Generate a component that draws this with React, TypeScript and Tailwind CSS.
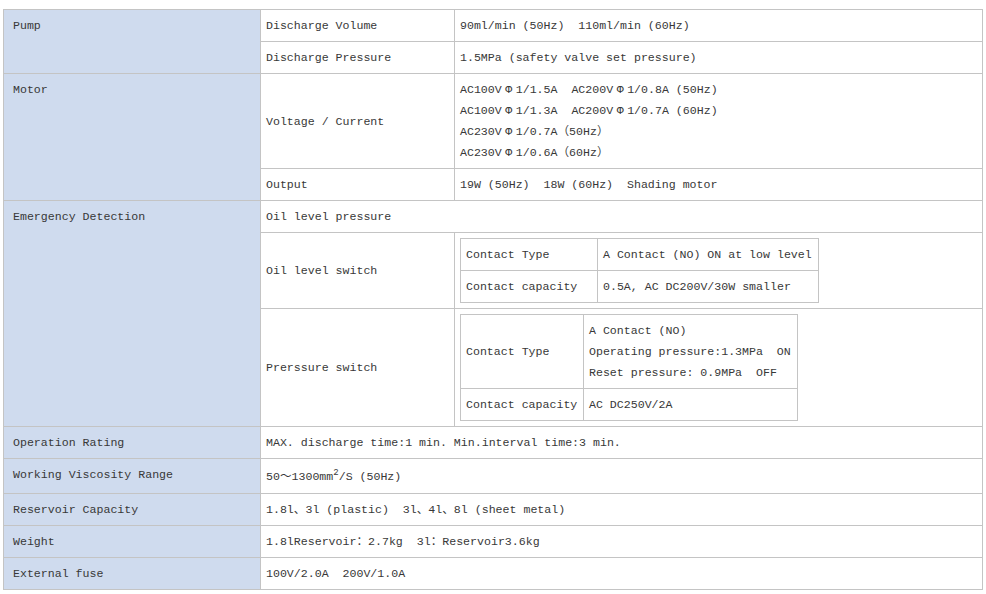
import { FC, ReactNode } from "react";

const font = "[font-family:'Liberation_Mono','Noto_Sans_CJK_SC',monospace]";

const Head: FC<{ children: ReactNode; rows?: number }> = ({ children, rows }) => (
  <td
    rowSpan={rows}
    className="border border-[#c4c4c4] bg-[#cfdbee] align-top pl-[9px] pr-2 pt-[8px] leading-[16px]"
  >
    {children}
  </td>
);

const Cell: FC<{ children: ReactNode; cols?: number; className?: string }> = ({
  children,
  cols,
  className,
}) => (
  <td
    colSpan={cols}
    className={`border border-[#c4c4c4] align-middle px-[5px] leading-[21px] ${className ?? ""}`}
  >
    {children}
  </td>
);

const Inner: FC<{ children: ReactNode; className?: string }> = ({ children, className }) => (
  <td className={`border border-[#c4c4c4] align-middle px-[5px] leading-[21px] ${className ?? ""}`}>
    {children}
  </td>
);

// full-width phi, as the source font draws it
const Phi = () => <span className="inline-block w-[14px] text-center">Φ</span>;

export default function App() {
  return (
    <div className={`w-[986px] h-[594px] bg-white pt-[9px] pl-[3px] text-[11.6px] text-[#383838] ${font}`}>
      <table className="border-collapse w-[979px] table-fixed">
        <colgroup>
          <col className="w-[257px]" />
          <col className="w-[194px]" />
          <col className="w-[528px]" />
        </colgroup>
        <tbody>
          <tr className="h-[32px]">
            <Head rows={2}>Pump</Head>
            <Cell>Discharge Volume</Cell>
            <Cell>90ml/min (50Hz)&nbsp;&nbsp;110ml/min (60Hz)</Cell>
          </tr>
          <tr className="h-[32px]">
            <Cell>Discharge Pressure</Cell>
            <Cell>1.5MPa (safety valve set pressure)</Cell>
          </tr>
          <tr className="h-[95px]">
            <Head rows={2}>Motor</Head>
            <Cell>Voltage / Current</Cell>
            <Cell>
              <div>AC100V<Phi />1/1.5A&nbsp;&nbsp;AC200V<Phi />1/0.8A (50Hz)</div>
              <div>AC100V<Phi />1/1.3A&nbsp;&nbsp;AC200V<Phi />1/0.7A (60Hz)</div>
              <div>AC230V<Phi />1/0.7A（50Hz）</div>
              <div>AC230V<Phi />1/0.6A（60Hz）</div>
            </Cell>
          </tr>
          <tr className="h-[32px]">
            <Cell>Output</Cell>
            <Cell>19W (50Hz)&nbsp;&nbsp;18W (60Hz)&nbsp;&nbsp;Shading motor</Cell>
          </tr>
          <tr className="h-[32px]">
            <Head rows={3}>Emergency Detection</Head>
            <Cell cols={2}>Oil level pressure</Cell>
          </tr>
          <tr className="h-[76px]">
            <Cell>Oil level switch</Cell>
            <Cell className="py-[5px]">
              <table className="border-collapse w-[358px] table-fixed">
                <colgroup>
                  <col className="w-[137px]" />
                  <col className="w-[221px]" />
                </colgroup>
                <tbody>
                  <tr className="h-[32px]">
                    <Inner>Contact Type</Inner>
                    <Inner>A Contact (NO) ON at low level</Inner>
                  </tr>
                  <tr className="h-[32px]">
                    <Inner>Contact capacity</Inner>
                    <Inner>0.5A, AC DC200V/30W smaller</Inner>
                  </tr>
                </tbody>
              </table>
            </Cell>
          </tr>
          <tr className="h-[118px]">
            <Cell>Prerssure switch</Cell>
            <Cell className="py-[5px]">
              <table className="border-collapse w-[337px] table-fixed">
                <colgroup>
                  <col className="w-[123px]" />
                  <col className="w-[214px]" />
                </colgroup>
                <tbody>
                  <tr className="h-[74px]">
                    <Inner>Contact Type</Inner>
                    <Inner>
                      <div>A Contact (NO)</div>
                      <div>Operating pressure:1.3MPa&nbsp;&nbsp;ON</div>
                      <div>Reset pressure: 0.9MPa&nbsp;&nbsp;OFF</div>
                    </Inner>
                  </tr>
                  <tr className="h-[32px]">
                    <Inner>Contact capacity</Inner>
                    <Inner>AC DC250V/2A</Inner>
                  </tr>
                </tbody>
              </table>
            </Cell>
          </tr>
          <tr className="h-[32px]">
            <Head>Operation Rating</Head>
            <Cell cols={2}>MAX. discharge time:1 min. Min.interval time:3 min.</Cell>
          </tr>
          <tr className="h-[35px]">
            <Head>Working Viscosity Range</Head>
            <Cell cols={2}>
              50〜1300mm<sup className="text-[9px]">2</sup>/S (50Hz)
            </Cell>
          </tr>
          <tr className="h-[32px]">
            <Head>Reservoir Capacity</Head>
            <Cell cols={2}>1.8l、3l (plastic)&nbsp;&nbsp;3l、4l、8l (sheet metal)</Cell>
          </tr>
          <tr className="h-[32px]">
            <Head>Weight</Head>
            <Cell cols={2}>1.8lReservoir：2.7kg&nbsp;&nbsp;3l：Reservoir3.6kg</Cell>
          </tr>
          <tr className="h-[32px]">
            <Head>External fuse</Head>
            <Cell cols={2}>100V/2.0A&nbsp;&nbsp;200V/1.0A</Cell>
          </tr>
        </tbody>
      </table>
    </div>
  );
}
